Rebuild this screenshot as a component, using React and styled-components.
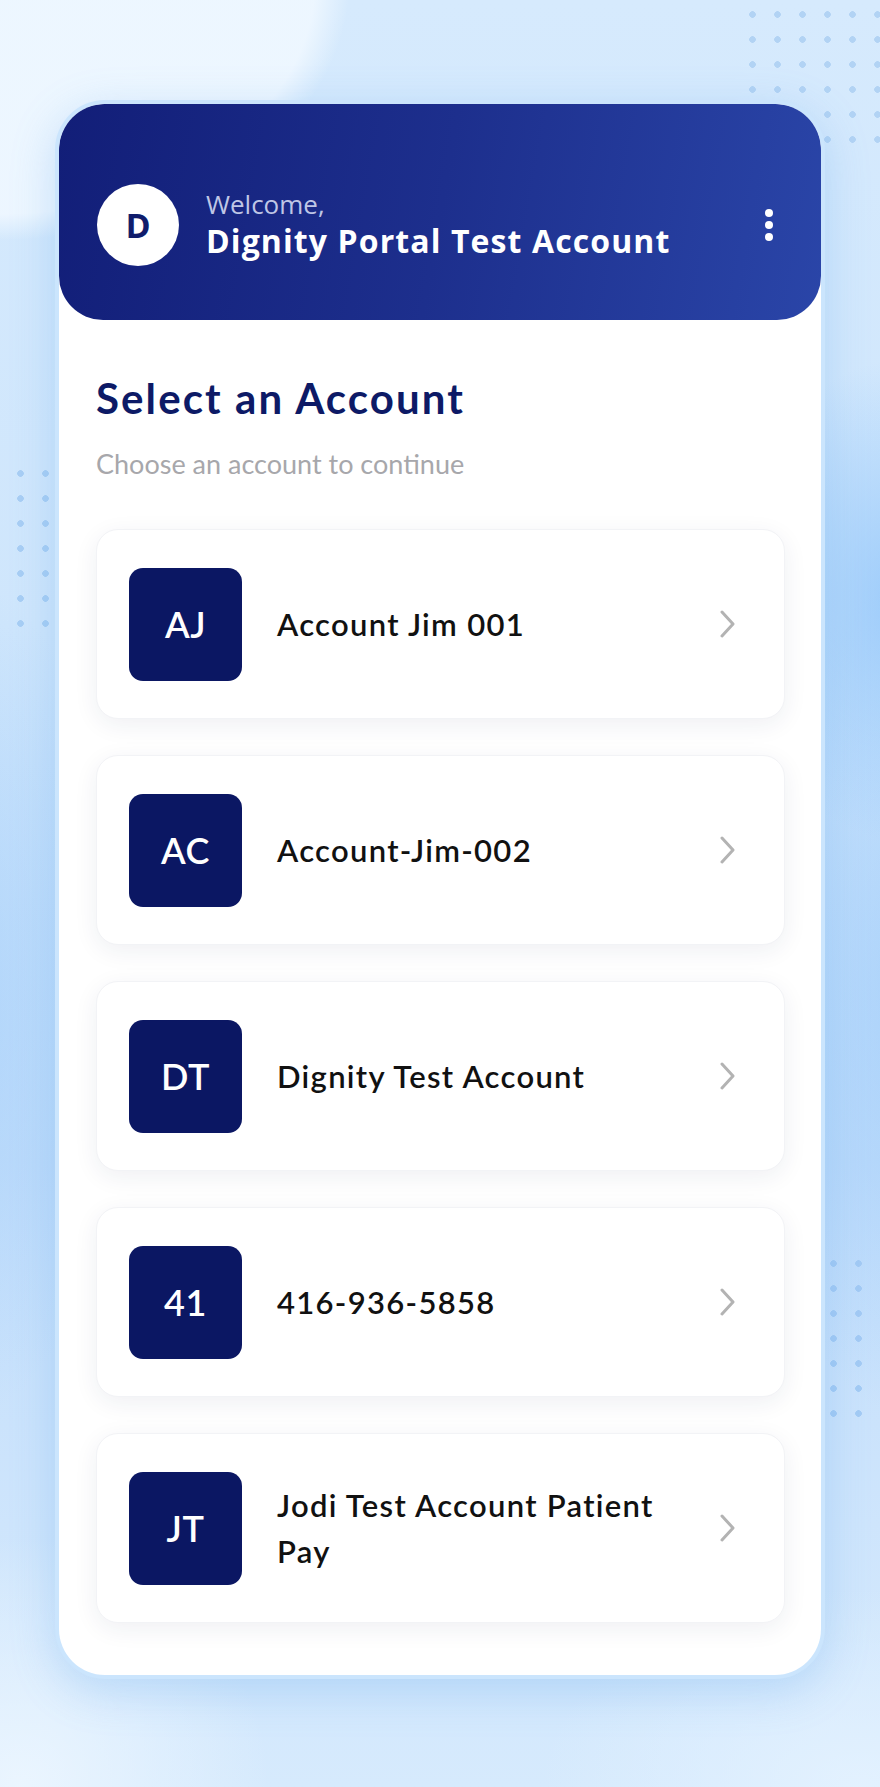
import React from 'react';
import styled, { createGlobalStyle } from 'styled-components';

const Global = createGlobalStyle`
  html, body { margin: 0; padding: 0; }
  body { font-family: Lato, "Open Sans", "Liberation Sans", sans-serif; -webkit-font-smoothing: antialiased; }
  * { box-sizing: border-box; }
`;

const Page = styled.div`
  position: relative;
  width: 880px;
  height: 1787px;
  overflow: hidden;
  padding-top: 100px;
  display: flex;
  justify-content: center;
  align-items: flex-start;
  background:
    radial-gradient(ellipse 350px 260px at 0px -20px, rgba(238,247,255,0.95) 90%, rgba(238,247,255,0) 100%),
    radial-gradient(ellipse 170px 240px at 900px 600px, rgba(140,195,250,0.75), rgba(140,195,250,0) 100%),
    radial-gradient(ellipse 190px 420px at 920px 1000px, rgba(150,200,250,0.6), rgba(150,200,250,0) 100%),
    radial-gradient(ellipse 170px 420px at -40px 1000px, rgba(160,205,250,0.6), rgba(160,205,250,0) 100%),
    radial-gradient(circle 250px at 20px 1787px, rgba(236,246,255,0.95), rgba(236,246,255,0) 100%),
    radial-gradient(ellipse 320px 200px at 860px 1787px, rgba(228,242,255,0.9), rgba(228,242,255,0) 100%),
    linear-gradient(180deg, #d6eafd 0%, #cfe6fc 35%, #c3defb 65%, #d6eafd 100%);
`;

const Dots = styled.div`
  position: absolute;
  left: ${p => p.$x}px;
  top: ${p => p.$y}px;
  width: ${p => p.$w}px;
  height: ${p => p.$h}px;
  background-image: radial-gradient(circle, ${p => p.$c} 3px, transparent 3.6px);
  background-size: 25px 25px;
  opacity: ${p => p.$o};
`;

const Frame = styled.div`
  position: relative;
  z-index: 1;
  width: 770px;
  height: 1579px;
  border: 4px solid rgba(200, 228, 253, 0.95);
  border-radius: 50px;
  background: #ffffff;
  box-shadow: 0 12px 44px rgba(90, 160, 235, 0.28);
  display: flex;
  flex-direction: column;
  overflow: hidden;
`;

const Header = styled.header`
  height: 216px;
  border-radius: 44px;
  background: linear-gradient(100deg, #121e78 0%, #1d2f8d 50%, #2a45a8 100%);
  display: flex;
  align-items: center;
  padding: 26px 48px 0 38px;
`;

const Avatar = styled.div`
  width: 82px;
  height: 82px;
  border-radius: 50%;
  background: #ffffff;
  color: #101c6c;
  font-family: "Open Sans", sans-serif;
  font-size: 34px;
  font-weight: 700;
  display: flex;
  align-items: center;
  justify-content: center;
  flex-shrink: 0;
`;

const Greeting = styled.div`
  margin-left: 27px;
  flex: 1;
  display: flex;
  flex-direction: column;
  font-family: "Open Sans", "Noto Sans", sans-serif;
`;

const Welcome = styled.div`
  font-size: 26px;
  line-height: 32px;
  color: #bfc6e6;
  font-weight: 400;
`;

const UserName = styled.div`
  font-size: 32px;
  line-height: 42px;
  color: #ffffff;
  font-weight: 700;
  letter-spacing: 1.1px;
`;

const Kebab = styled.div`
  display: flex;
  flex-direction: column;
  gap: 4px;
  padding: 4px 0;
  span {
    width: 8px;
    height: 8px;
    border-radius: 50%;
    background: #ffffff;
  }
`;

const Body = styled.main`
  padding: 54px 36px 0 37px;
  display: flex;
  flex-direction: column;
`;

const Title = styled.h1`
  margin: 0;
  font-size: 42px;
  line-height: 48px;
  font-weight: 700;
  letter-spacing: 2.1px;
  color: #0d1a66;
`;

const Subtitle = styled.p`
  margin: 26px 0 0;
  font-size: 27px;
  line-height: 32px;
  color: #a7a7ab;
  font-weight: 400;
`;

const List = styled.div`
  margin-top: 49px;
  display: flex;
  flex-direction: column;
  gap: 36px;
`;

const Card = styled.div`
  height: 190px;
  border-radius: 22px;
  background: #ffffff;
  border: 1px solid #f2f3f6;
  box-shadow: 0 6px 24px rgba(30, 45, 90, 0.07);
  display: flex;
  align-items: center;
  padding: 0 48px 0 32px;
`;

const Initials = styled.div`
  width: 113px;
  height: 113px;
  border-radius: 14px;
  background: #0b1763;
  color: #ffffff;
  font-size: 36px;
  font-weight: 600;
  letter-spacing: 0.5px;
  display: flex;
  align-items: center;
  justify-content: center;
  flex-shrink: 0;
`;

const Name = styled.div`
  flex: 1;
  margin: 0 40px 0 35px;
  font-size: 31px;
  line-height: 46px;
  font-weight: 600;
  letter-spacing: 1.3px;
  color: #111111;
`;

const Chevron = () => (
  <svg width="16" height="28" viewBox="0 0 16 28" fill="none">
    <polyline points="2,2 13,14 2,26" stroke="#b3b3b3" strokeWidth="3" strokeLinecap="round" strokeLinejoin="round" />
  </svg>
);

const accounts = [
  { initials: 'AJ', name: 'Account Jim 001' },
  { initials: 'AC', name: 'Account-Jim-002' },
  { initials: 'DT', name: 'Dignity Test Account' },
  { initials: '41', name: '416-936-5858' },
  { initials: 'JT', name: 'Jodi Test Account Patient Pay' },
];

export default function App() {
  return (
    <Page>
      <Global />
      <Dots $x={740} $y={2} $w={140} $h={150} $c="#a9cdf2" $o={0.8} />
      <Dots $x={8} $y={461} $w={50} $h={175} $c="#a3cbf3" $o={0.9} />
      <Dots $x={821} $y={1251} $w={60} $h={175} $c="#9fc8f3" $o={0.9} />
      <Frame>
        <Header>
          <Avatar>D</Avatar>
          <Greeting>
            <Welcome>Welcome,</Welcome>
            <UserName>Dignity Portal Test Account</UserName>
          </Greeting>
          <Kebab><span /><span /><span /></Kebab>
        </Header>
        <Body>
          <Title>Select an Account</Title>
          <Subtitle>Choose an account to continue</Subtitle>
          <List>
            {accounts.map(a => (
              <Card key={a.initials}>
                <Initials>{a.initials}</Initials>
                <Name>{a.name}</Name>
                <Chevron />
              </Card>
            ))}
          </List>
        </Body>
      </Frame>
    </Page>
  );
}
